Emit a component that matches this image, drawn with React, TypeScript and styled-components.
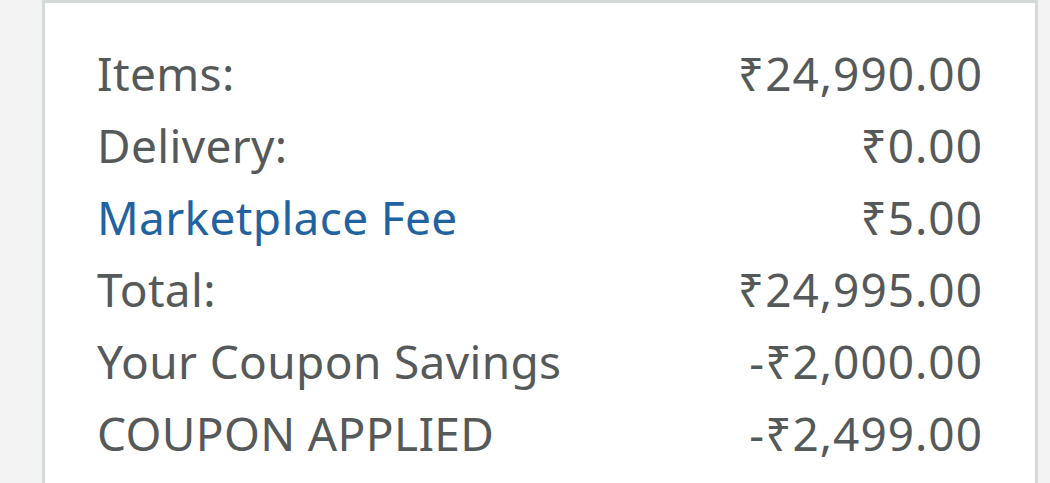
import React from 'react';
import styled, { createGlobalStyle } from 'styled-components';

const GlobalStyle = createGlobalStyle`
  html, body {
    margin: 0;
    padding: 0;
    background: #f3f3f3;
  }
  body {
    font-family: "Noto Sans", "Open Sans", sans-serif;
  }
`;

const Page = styled.div`
  height: 483px;
  overflow: hidden;
  padding-left: 42px;
`;

const Card = styled.div`
  width: 996px;
  min-height: 483px;
  background: #ffffff;
  border: 3px solid #d5d9d9;
  border-bottom: none;
  padding: 34px 53px 0 52px;
  box-sizing: border-box;
  display: flex;
  flex-direction: column;
`;

const Row = styled.div`
  display: flex;
  justify-content: space-between;
  align-items: baseline;
  font-size: 46px;
  line-height: 72px;
  color: #565959;
`;

const Label = styled.span<{ $link?: boolean }>`
  color: ${(p) => (p.$link ? '#2162a1' : '#565959')};
  letter-spacing: 0.35px;
`;

const Amount = styled.span`
  text-align: right;
  letter-spacing: 1px;
  margin-right: -1px;
`;

const rows = [
  { label: 'Items:', amount: '₹24,990.00' },
  { label: 'Delivery:', amount: '₹0.00' },
  { label: 'Marketplace Fee', amount: '₹5.00', link: true },
  { label: 'Total:', amount: '₹24,995.00' },
  { label: 'Your Coupon Savings', amount: '-₹2,000.00' },
  { label: 'COUPON APPLIED', amount: '-₹2,499.00' },
];

export default function App() {
  return (
    <Page>
      <GlobalStyle />
      <Card>
        {rows.map((r) => (
          <Row key={r.label}>
            <Label $link={r.link}>{r.label}</Label>
            <Amount>{r.amount}</Amount>
          </Row>
        ))}
      </Card>
    </Page>
  );
}
